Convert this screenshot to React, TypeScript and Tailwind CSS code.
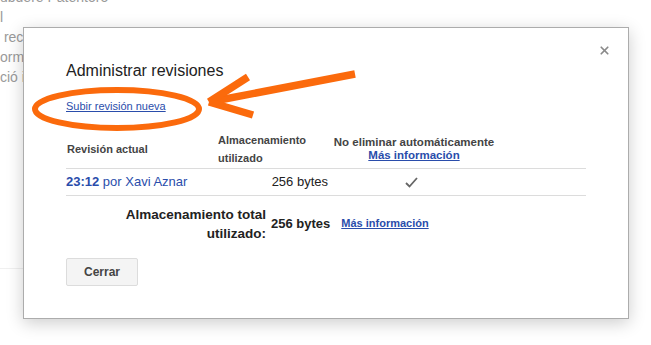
import { X } from 'lucide-react'

const font = { fontFamily: '"Liberation Sans", Arial, sans-serif' }

const backgroundLines = ['ubdere Patentoro', 'l', ' rec', 'orme', 'ció i']

function Annotation() {
  return (
    <svg className="pointer-events-none absolute left-0 top-0" width="651" height="345" viewBox="0 0 651 345">
      <ellipse cx="117" cy="109" rx="82" ry="19" fill="none" stroke="#fb6a0c" strokeWidth="6" />
      <g stroke="#fb6a0c" strokeWidth="7.5" strokeLinecap="butt" fill="none">
        <line x1="355" y1="74" x2="209" y2="102" />
        <line x1="248" y1="77" x2="209" y2="102" />
        <line x1="253" y1="115" x2="209" y2="102" />
      </g>
    </svg>
  )
}

export default function App() {
  return (
    <div className="relative h-[345px] w-[651px] overflow-hidden bg-white" style={font}>
      <div className="-mt-[13px] flex flex-col text-[14px] leading-[20px] text-[#9a9a9a]">
        {backgroundLines.map((line, index) => (
          <span key={index} className="whitespace-pre">{line}</span>
        ))}
      </div>
      <div className="absolute left-0 top-[268px] h-px w-[24px] bg-[#f0f0f0]" />

      <div className="absolute left-[23px] top-[27px] h-[292px] w-[606px] border border-[#acacac] bg-white px-[42px] pt-[33px] shadow-[0_4px_16px_rgba(0,0,0,0.2)]">
        <button type="button" className="absolute right-[17px] top-[16px] text-[#8a8a8a]">
          <X className="h-[13px] w-[13px]" strokeWidth={3.2} />
        </button>

        <h2 className="text-[16px] leading-[20px] text-[#222]">Administrar revisiones</h2>
        <a href="#" className="mt-[18px] block text-[11px] leading-[14px] text-[#2a4dab] underline">Subir revisión nueva</a>

        <table className="mt-[17px] w-[520px] border-collapse text-left">
          <thead>
            <tr className="h-[38px] border-b border-[#dcdcdc] text-[11px] font-bold text-[#444]">
              <th className="w-[152px] pl-px align-middle">Revisión actual</th>
              <th className="w-[114px] align-middle leading-[18px]">Almacenamiento<br />utilizado</th>
              <th className="w-[164px] text-center align-middle text-[11.5px] leading-[13px]">
                No eliminar automáticamente
                <br />
                <a href="#" className="text-[#2a4dab] underline">Más información</a>
              </th>
              <th />
            </tr>
          </thead>
          <tbody>
            <tr className="h-[27px] border-b border-[#dcdcdc] text-[13px]">
              <td className="align-middle text-[#2a4dab]"><span className="font-bold">23:12</span> por Xavi Aznar</td>
              <td className="pr-[4px] text-right align-middle text-[#222]">256 bytes</td>
              <td className="text-center align-middle">
                <svg className="mx-auto -ml-[5px] inline-block" width="13" height="11" viewBox="0 0 13 11">
                  <path d="M1 6 L4.5 9.5 L12 1" fill="none" stroke="#666" strokeWidth="1.8" />
                </svg>
              </td>
              <td />
            </tr>
          </tbody>
        </table>

        <div className="mt-[9px] flex items-center">
          <div className="w-[200px] text-right text-[13.5px] font-bold leading-[19px] text-[#222]">Almacenamiento total<br />utilizado:</div>
          <span className="ml-[5px] text-[13px] font-bold text-[#222]">256 bytes</span>
          <a href="#" className="ml-[11px] text-[11px] font-bold text-[#2a4dab] underline">Más información</a>
        </div>

        <button type="button" className="mt-[15px] h-[28px] w-[72px] rounded-[2px] border border-[#dcdcdc] bg-[#f4f4f4] text-[12px] font-bold text-[#444]">Cerrar</button>
      </div>

      <Annotation />
    </div>
  )
}
